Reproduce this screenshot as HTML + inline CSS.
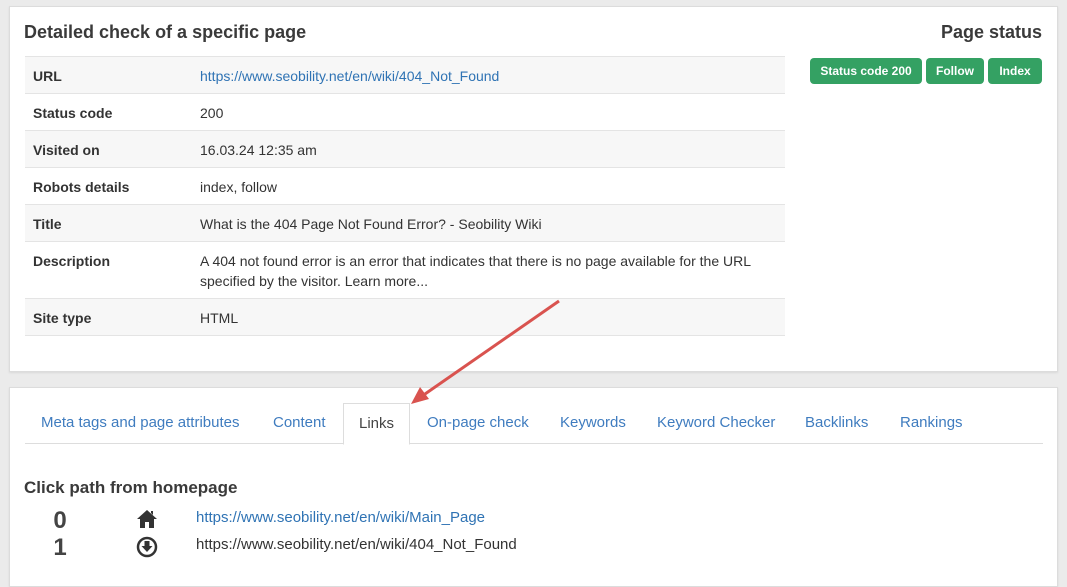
<!DOCTYPE html>
<html><head><meta charset="utf-8"><style>
*{box-sizing:border-box;margin:0;padding:0}
body{width:1067px;height:572px;overflow:hidden;background:#ebebeb;font-family:"Liberation Sans",sans-serif;color:#333;position:relative}
.panel{position:absolute;background:#fff;border:1px solid #dcdcdc;box-shadow:0 1px 2px rgba(0,0,0,.08)}
h2{position:absolute;font-size:18px;font-weight:bold;color:#3a3a3a}
table{position:absolute;left:15px;top:49px;width:760px;border-collapse:collapse;font-size:14px}
td{border-top:1px solid #e4e4e4;padding:0 8px;vertical-align:top;height:37px;line-height:20px;padding-top:9px}
tr:nth-child(odd) td{background:#f7f7f7}
tr:last-child td{border-bottom:1px solid #e4e4e4}
td.k{font-weight:bold;width:167px;color:#333}
a{color:#2f73b4;text-decoration:none}
.badge{position:absolute;top:57px;height:26px;background:#34a163;color:#fff;font-weight:bold;font-size:12px;line-height:26px;text-align:center;border-radius:4px}
.tabs{position:absolute;left:15px;top:15px;width:1018px;height:41px;border-bottom:1px solid #ddd}
.tab{position:absolute;top:0;height:41px;line-height:40px;font-size:15px;color:#3f7cbf}
.tab.act{border:1px solid #ddd;border-bottom:1px solid #fff;color:#444;background:#fff;height:42px;text-align:center}
.num{position:absolute;font-size:24px;font-weight:bold;color:#444;width:30px;text-align:center}
.u{position:absolute;left:186px;font-size:15px}
</style></head><body>
<div class="panel" style="left:9px;top:6px;width:1049px;height:366px">
<h2 style="left:14px;top:15px">Detailed check of a specific page</h2>
<h2 style="right:15px;top:15px">Page status</h2>
<table>
<tr><td class="k">URL</td><td><a>https://www.seobility.net/en/wiki/404_Not_Found</a></td></tr>
<tr><td class="k">Status code</td><td>200</td></tr>
<tr><td class="k">Visited on</td><td>16.03.24 12:35 am</td></tr>
<tr><td class="k">Robots details</td><td>index, follow</td></tr>
<tr><td class="k">Title</td><td>What is the 404 Page Not Found Error? - Seobility Wiki</td></tr>
<tr><td class="k" style="height:57px">Description</td><td>A 404 not found error is an error that indicates that there is no page available for the URL specified by the visitor. Learn more...</td></tr>
<tr><td class="k">Site type</td><td>HTML</td></tr>
</table>
<div class="badge" style="left:800px;top:51px;width:112px">Status code 200</div>
<div class="badge" style="left:916px;top:51px;width:58px">Follow</div>
<div class="badge" style="left:978px;top:51px;width:54px">Index</div>
</div>
<div class="panel" style="left:9px;top:387px;width:1049px;height:200px">
<div class="tabs">
<div class="tab" style="left:16px">Meta tags and page attributes</div>
<div class="tab" style="left:248px">Content</div>
<div class="tab act" style="left:318px;width:67px">Links</div>
<div class="tab" style="left:402px">On-page check</div>
<div class="tab" style="left:535px">Keywords</div>
<div class="tab" style="left:632px">Keyword Checker</div>
<div class="tab" style="left:780px">Backlinks</div>
<div class="tab" style="left:875px">Rankings</div>
</div>
<h2 style="left:14px;top:90px;font-size:17px">Click path from homepage</h2>
<div class="num" style="left:35px;top:119px">0</div>
<div class="num" style="left:35px;top:146px">1</div>
<svg style="position:absolute;left:126px;top:121px" width="22" height="20" viewBox="0 0 22 20"><path d="M11 1 L21 10 L18 10 L18 19 L13 19 L13 13 L9 13 L9 19 L4 19 L4 10 L1 10 Z M15 2 L17 2 L17 6 L15 4 Z" fill="#333"/></svg>
<svg style="position:absolute;left:126px;top:148px" width="22" height="22" viewBox="0 0 22 22"><circle cx="11" cy="11" r="9" fill="none" stroke="#333" stroke-width="2.5"/><path d="M8.5 5h5v5h3l-5.5 6-5.5-6h3z" fill="#333"/></svg>
<div class="u" style="top:121px"><a>https://www.seobility.net/en/wiki/Main_Page</a></div>
<div class="u" style="top:148px;color:#333">https://www.seobility.net/en/wiki/404_Not_Found</div>
</div>
<svg style="position:absolute;left:0;top:0" width="1067" height="572"><line x1="559" y1="301" x2="425" y2="394" stroke="#d9534f" stroke-width="3"/><path d="M411 404 L420 387 L429 399 Z" fill="#d9534f"/></svg>
</body></html>
